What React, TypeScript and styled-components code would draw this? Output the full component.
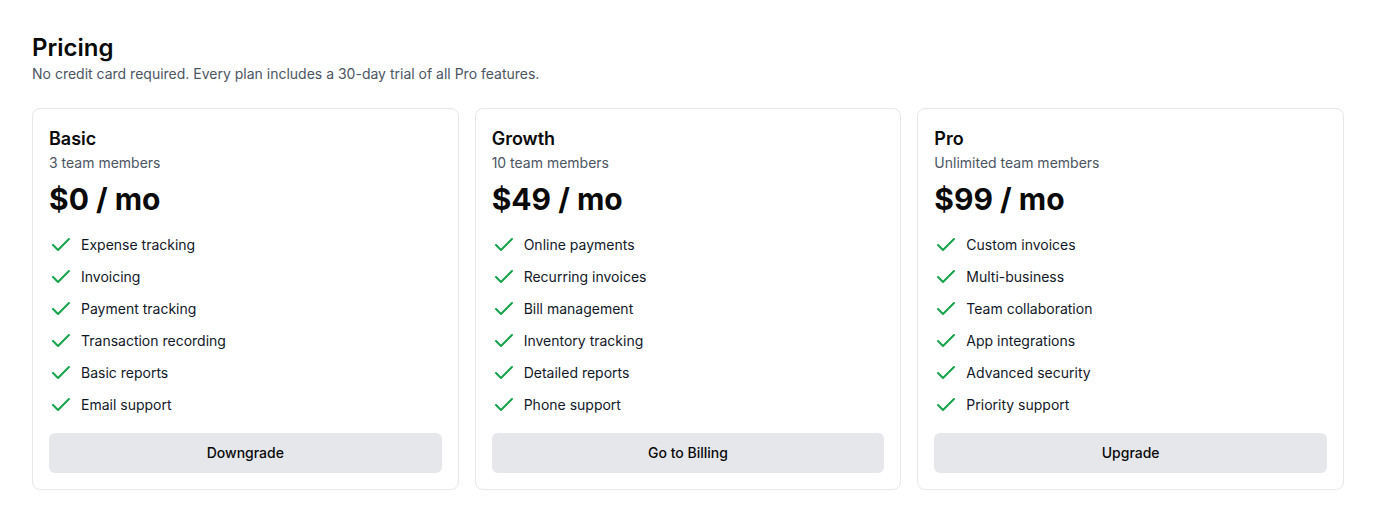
import React from "react";
import styled, { createGlobalStyle } from "styled-components";
import { Check } from "lucide-react";

const Global = createGlobalStyle`
  * { box-sizing: border-box; }
  body {
    margin: 0;
    background: #ffffff;
    font-family: Inter, "Noto Sans", sans-serif;
    color: #0a0a0a;
    -webkit-font-smoothing: antialiased;
  }
`;

const Page = styled.main`
  padding: 32px 32px 32px;
`;

const Header = styled.header`
  margin-bottom: 24px;
`;

const Title = styled.h1`
  margin: 0;
  font-size: 24px;
  line-height: 32px;
  font-weight: 600;
  color: #0a0a0a;
`;

const Subtitle = styled.p`
  margin: 0;
  font-size: 14px;
  line-height: 20px;
  color: #4b5563;
`;

const Grid = styled.div`
  display: grid;
  grid-template-columns: repeat(3, 1fr);
  gap: 16px;
`;

const Card = styled.section`
  border: 1px solid #e5e7eb;
  border-radius: 8px;
  padding: 16px;
  display: flex;
  flex-direction: column;
`;

const PlanName = styled.h2`
  margin: 0;
  font-size: 18px;
  line-height: 28px;
  font-weight: 600;
  color: #0a0a0a;
`;

const Members = styled.p`
  margin: 0;
  font-size: 14px;
  line-height: 20px;
  color: #4b5563;
`;

const Price = styled.p`
  margin: 8px 0 0;
  font-size: 30px;
  line-height: 36px;
  font-weight: 700;
  color: #0a0a0a;
`;

const Features = styled.ul`
  list-style: none;
  margin: 16px 0 0;
  padding: 0;
  display: flex;
  flex-direction: column;
  gap: 8px;
`;

const Feature = styled.li`
  display: flex;
  align-items: center;
  gap: 8px;
  font-size: 14px;
  line-height: 24px;
  color: #111827;
`;

const CheckIcon = styled(Check)`
  flex-shrink: 0;
  color: #16a34a;
`;

const Button = styled.button`
  margin-top: 16px;
  height: 40px;
  width: 100%;
  border: none;
  border-radius: 6px;
  background: #e5e7eb;
  font-family: inherit;
  font-size: 14px;
  line-height: 20px;
  font-weight: 500;
  color: #0a0a0a;
  cursor: pointer;
  padding: 10px 16px;
`;

type Plan = {
  name: string;
  members: string;
  price: string;
  features: string[];
  action: string;
};

const plans: Plan[] = [
  {
    name: "Basic",
    members: "3 team members",
    price: "$0 / mo",
    features: [
      "Expense tracking",
      "Invoicing",
      "Payment tracking",
      "Transaction recording",
      "Basic reports",
      "Email support",
    ],
    action: "Downgrade",
  },
  {
    name: "Growth",
    members: "10 team members",
    price: "$49 / mo",
    features: [
      "Online payments",
      "Recurring invoices",
      "Bill management",
      "Inventory tracking",
      "Detailed reports",
      "Phone support",
    ],
    action: "Go to Billing",
  },
  {
    name: "Pro",
    members: "Unlimited team members",
    price: "$99 / mo",
    features: [
      "Custom invoices",
      "Multi-business",
      "Team collaboration",
      "App integrations",
      "Advanced security",
      "Priority support",
    ],
    action: "Upgrade",
  },
];

export default function App() {
  return (
    <>
      <Global />
      <Page>
        <Header>
          <Title>Pricing</Title>
          <Subtitle>
            No credit card required. Every plan includes a 30-day trial of all Pro features.
          </Subtitle>
        </Header>
        <Grid>
          {plans.map((p) => (
            <Card key={p.name}>
              <PlanName>{p.name}</PlanName>
              <Members>{p.members}</Members>
              <Price>{p.price}</Price>
              <Features>
                {p.features.map((f) => (
                  <Feature key={f}>
                    <CheckIcon size={24} strokeWidth={2} />
                    {f}
                  </Feature>
                ))}
              </Features>
              <Button>{p.action}</Button>
            </Card>
          ))}
        </Grid>
      </Page>
    </>
  );
}
